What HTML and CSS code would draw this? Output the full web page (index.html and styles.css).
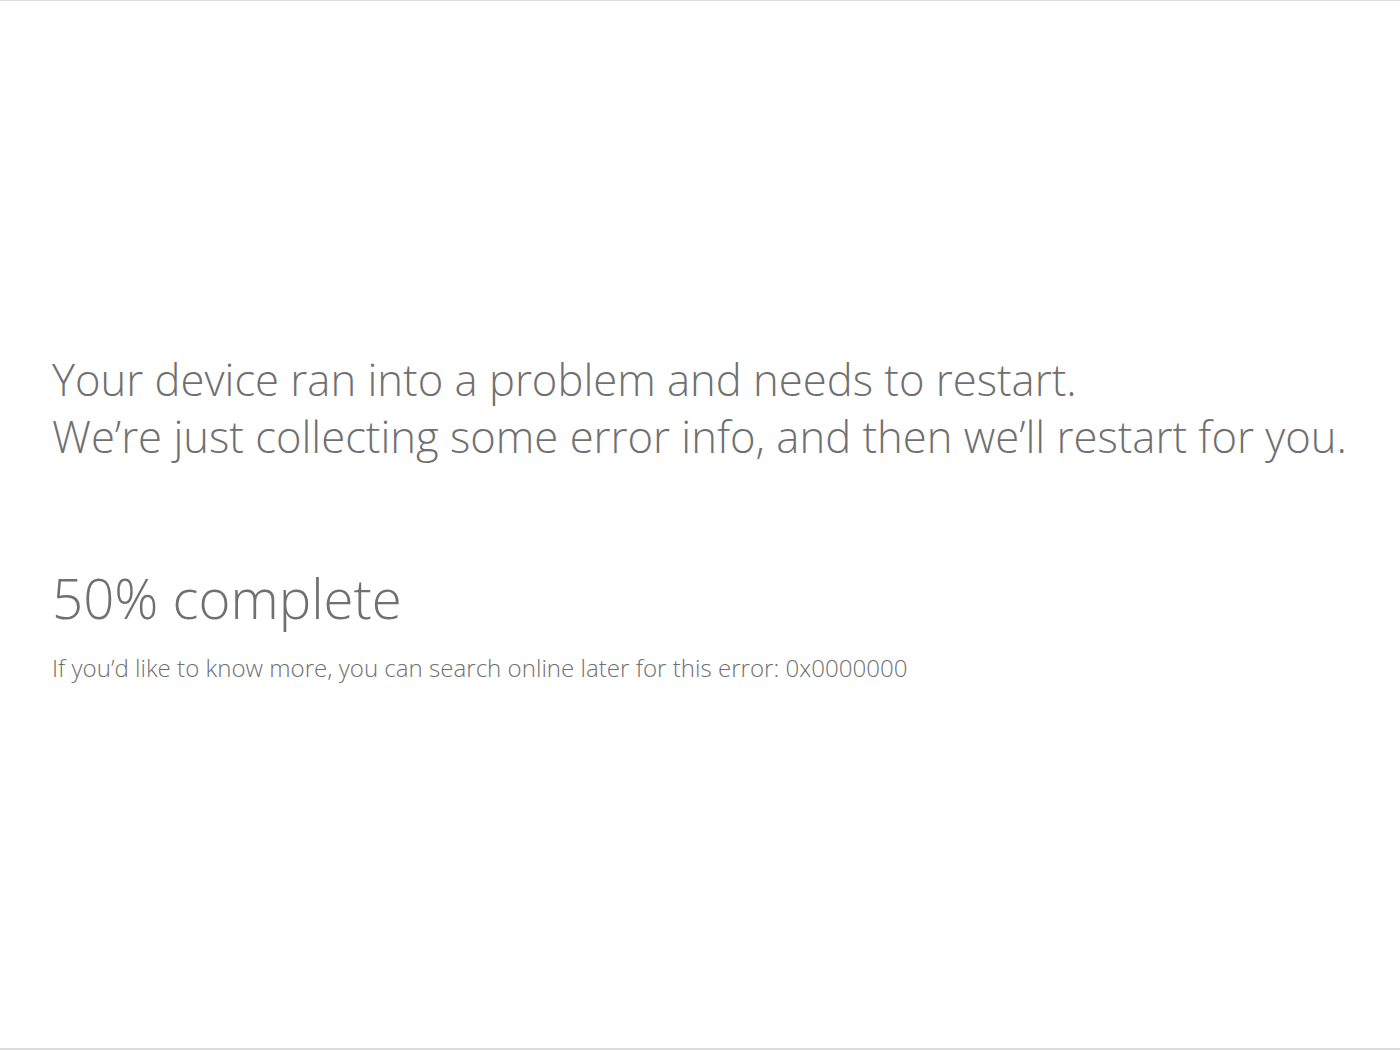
FILE: index.html
```html
<!DOCTYPE html>
<html lang="en">
<head>
<meta charset="utf-8">
<title>Restart</title>
<link rel="stylesheet" href="styles.css">
</head>
<body>
<main class="screen">
  <div class="content">
    <p class="message">Your device ran into a problem and needs to restart.<br>We’re just collecting some error info, and then we’ll restart for you.</p>
    <p class="progress">50% complete</p>
    <p class="info">If you’d like to know more, you can search online later for this error: 0x0000000</p>
  </div>
</main>
</body>
</html>
```

FILE: styles.css
```css
html, body {
  margin: 0;
  padding: 0;
  background: #ffffff;
}
.screen {
  box-sizing: border-box;
  width: 1400px;
  height: 1050px;
  border-top: 1px solid #dcdcdc;
  border-bottom: 2px solid #dcdcdc;
  font-family: "Open Sans", "Noto Sans", sans-serif;
  font-weight: 300;
  color: #707070;
  padding: 350px 0 0 52px;
}
.content {
  display: flex;
  flex-direction: column;
}
.message {
  margin: 0;
  font-size: 43.6px;
  line-height: 57px;
  white-space: nowrap;
}
.progress {
  margin: 98px 0 0 0;
  font-size: 54.6px;
  line-height: 70px;
}
.info {
  margin: 20px 0 0 0;
  font-size: 24.1px;
  line-height: 30px;
  font-weight: 300;
  white-space: nowrap;
}
```
